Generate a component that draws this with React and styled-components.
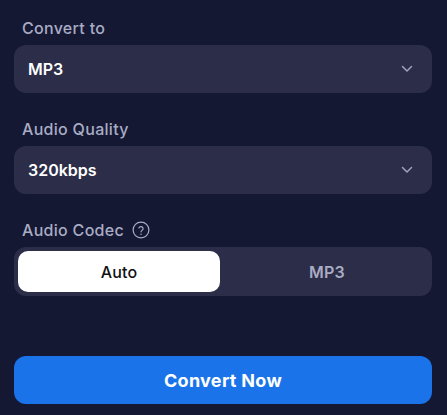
import React, { useState } from "react";
import styled, { createGlobalStyle } from "styled-components";

const GlobalStyle = createGlobalStyle`
  html, body {
    margin: 0;
    padding: 0;
    background: #141833;
  }
  * {
    box-sizing: border-box;
  }
`;

const Panel = styled.div`
  display: flex;
  flex-direction: column;
  padding: 18px 15px 0 14px;
  font-family: "Inter", "Liberation Sans", sans-serif;
`;

const Field = styled.div`
  display: flex;
  flex-direction: column;
  margin-bottom: 26px;
`;

const Label = styled.div`
  display: flex;
  align-items: center;
  gap: 8px;
  height: 20px;
  margin: 0 0 7px 8px;
  font-size: 16px;
  font-weight: 500;
  letter-spacing: 0.3px;
  color: #a9acc4;
`;

const Select = styled.div`
  display: flex;
  align-items: center;
  justify-content: space-between;
  height: 48px;
  padding: 0 19px 0 14px;
  border-radius: 12px;
  background: #2c2d48;
  color: #ffffff;
  font-size: 16px;
  font-weight: 600;
  cursor: pointer;
`;

const Toggle = styled.div`
  display: grid;
  grid-template-columns: 1fr 1fr;
  gap: 6px;
  height: 49px;
  padding: 4px;
  border-radius: 12px;
  background: #2c2d48;
`;

const ToggleOption = styled.button`
  border: none;
  border-radius: 10px;
  font-family: inherit;
  font-size: 16px;
  font-weight: ${(p) => (p.$active ? 500 : 600)};
  letter-spacing: 0.2px;
  background: ${(p) => (p.$active ? "#ffffff" : "transparent")};
  color: ${(p) => (p.$active ? "#111111" : "#a9acc4")};
  cursor: pointer;
`;

const ConvertButton = styled.button`
  margin-top: 34px;
  height: 48px;
  border: none;
  border-radius: 12px;
  background: #1a73e8;
  color: #ffffff;
  font-family: inherit;
  font-size: 18px;
  font-weight: 700;
  letter-spacing: 0.3px;
  cursor: pointer;
`;

const Chevron = () => (
  <svg width="12" height="8" viewBox="0 0 12 8" fill="none">
    <path
      d="M1.5 1.5L6 6L10.5 1.5"
      stroke="#a0a3bb"
      strokeWidth="1.5"
      strokeLinecap="round"
      strokeLinejoin="round"
    />
  </svg>
);

const HelpIcon = () => (
  <svg width="18" height="18" viewBox="0 0 24 24" fill="none">
    <circle cx="12" cy="12" r="10.5" stroke="#a9acc4" strokeWidth="1.6" />
    <path
      d="M9.2 9.3a2.9 2.9 0 0 1 5.6 1c0 1.9-2.8 2.4-2.8 4.1"
      stroke="#a9acc4"
      strokeWidth="1.6"
      strokeLinecap="round"
    />
    <circle cx="12" cy="17.5" r="1" fill="#a9acc4" />
  </svg>
);

export default function App() {
  const [codec, setCodec] = useState("Auto");

  return (
    <>
      <GlobalStyle />
      <Panel>
        <Field>
          <Label>Convert to</Label>
          <Select>
            MP3
            <Chevron />
          </Select>
        </Field>
        <Field>
          <Label>Audio Quality</Label>
          <Select>
            320kbps
            <Chevron />
          </Select>
        </Field>
        <Field>
          <Label>
            Audio Codec
            <HelpIcon />
          </Label>
          <Toggle>
            {["Auto", "MP3"].map((c) => (
              <ToggleOption
                key={c}
                $active={codec === c}
                onClick={() => setCodec(c)}
              >
                {c}
              </ToggleOption>
            ))}
          </Toggle>
        </Field>
        <ConvertButton>Convert Now</ConvertButton>
      </Panel>
    </>
  );
}
